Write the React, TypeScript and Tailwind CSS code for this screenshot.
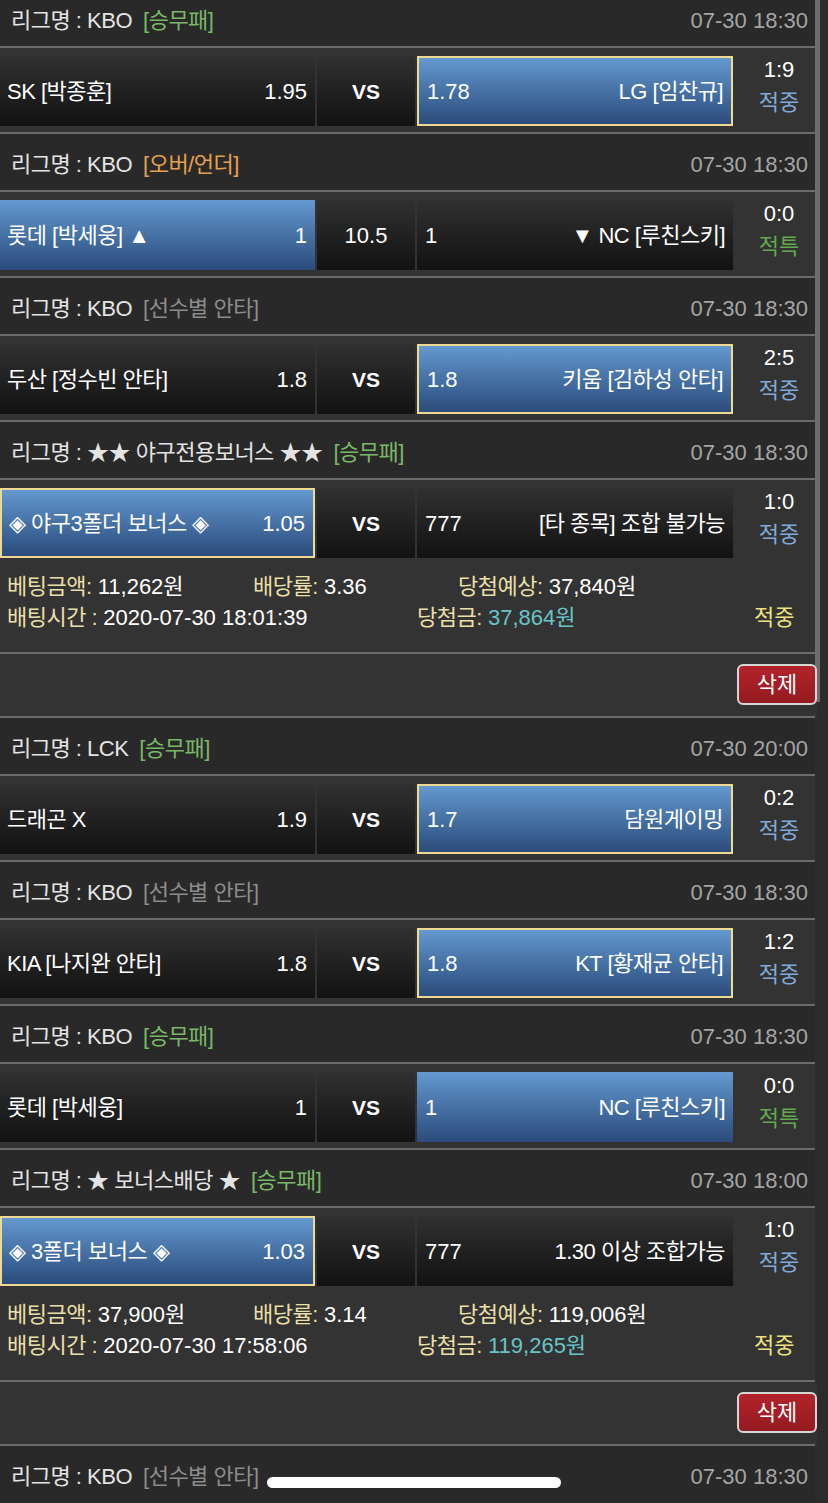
import React from 'react';

type Side = { name: string; odds: string; sel?: boolean; border?: boolean };
type Match = {
  league: string;
  tag: string;
  tagColor: string;
  time: string;
  home: Side;
  mid: string;
  midBold?: boolean;
  away: Side;
  score: string;
  result: string;
  resultColor: string;
};
type Summary = { amount: string; rate: string; expect: string; time: string; win: string };
type Group = { matches: Match[]; summary?: Summary };

const GREEN = 'text-[#79b866]';
const ORANGE = 'text-[#e6a04c]';
const GRAY = 'text-[#8c8c8c]';
const HIT = 'text-[#7fa9da]';
const SPECIAL = 'text-[#62a94e]';

const GROUPS: Group[] = [
  {
    matches: [
      { league: 'KBO', tag: '[승무패]', tagColor: GREEN, time: '07-30 18:30', home: { name: 'SK [박종훈]', odds: '1.95' }, mid: 'VS', midBold: true, away: { name: 'LG [임찬규]', odds: '1.78', sel: true, border: true }, score: '1:9', result: '적중', resultColor: HIT },
      { league: 'KBO', tag: '[오버/언더]', tagColor: ORANGE, time: '07-30 18:30', home: { name: '롯데 [박세웅] ▲', odds: '1', sel: true }, mid: '10.5', away: { name: '▼ NC [루친스키]', odds: '1' }, score: '0:0', result: '적특', resultColor: SPECIAL },
      { league: 'KBO', tag: '[선수별 안타]', tagColor: GRAY, time: '07-30 18:30', home: { name: '두산 [정수빈 안타]', odds: '1.8' }, mid: 'VS', midBold: true, away: { name: '키움 [김하성 안타]', odds: '1.8', sel: true, border: true }, score: '2:5', result: '적중', resultColor: HIT },
      { league: '★★ 야구전용보너스 ★★', tag: '[승무패]', tagColor: GREEN, time: '07-30 18:30', home: { name: '◈ 야구3폴더 보너스 ◈', odds: '1.05', sel: true, border: true }, mid: 'VS', midBold: true, away: { name: '[타 종목] 조합 불가능', odds: '777' }, score: '1:0', result: '적중', resultColor: HIT },
    ],
    summary: { amount: '11,262원', rate: '3.36', expect: '37,840원', time: '2020-07-30 18:01:39', win: '37,864원' },
  },
  {
    matches: [
      { league: 'LCK', tag: '[승무패]', tagColor: GREEN, time: '07-30 20:00', home: { name: '드래곤 X', odds: '1.9' }, mid: 'VS', midBold: true, away: { name: '담원게이밍', odds: '1.7', sel: true, border: true }, score: '0:2', result: '적중', resultColor: HIT },
      { league: 'KBO', tag: '[선수별 안타]', tagColor: GRAY, time: '07-30 18:30', home: { name: 'KIA [나지완 안타]', odds: '1.8' }, mid: 'VS', midBold: true, away: { name: 'KT [황재균 안타]', odds: '1.8', sel: true, border: true }, score: '1:2', result: '적중', resultColor: HIT },
      { league: 'KBO', tag: '[승무패]', tagColor: GREEN, time: '07-30 18:30', home: { name: '롯데 [박세웅]', odds: '1' }, mid: 'VS', midBold: true, away: { name: 'NC [루친스키]', odds: '1', sel: true }, score: '0:0', result: '적특', resultColor: SPECIAL },
      { league: '★ 보너스배당 ★', tag: '[승무패]', tagColor: GREEN, time: '07-30 18:00', home: { name: '◈ 3폴더 보너스 ◈', odds: '1.03', sel: true, border: true }, mid: 'VS', midBold: true, away: { name: '1.30 이상 조합가능', odds: '777' }, score: '1:0', result: '적중', resultColor: HIT },
    ],
    summary: { amount: '37,900원', rate: '3.14', expect: '119,006원', time: '2020-07-30 17:58:06', win: '119,265원' },
  },
];

function cellClass(s: Side) {
  const bg = s.sel
    ? 'bg-linear-to-b from-[#6499d0] to-[#2b4c7c]'
    : 'bg-linear-to-b from-[#313131] to-[#121212]';
  return `${bg} ${s.border ? 'border-2 border-[#efd993]' : ''}`;
}

function Line() {
  return <div className="h-[2px] bg-[#6b6b6b]"></div>;
}

function Header({ league, tag, tagColor, time }: { league: string; tag: string; tagColor: string; time: string }) {
  return (
    <div className="h-[56px] bg-[#292929] flex items-center pt-[4px] pl-[11px] pr-[7px]">
      <span className="text-[#e4e4e4] tracking-[-0.5px]">리그명 : {league}</span>
      <span className={`ml-[11px] tracking-[-0.5px] ${tagColor}`}>{tag}</span>
      <span className="ml-auto text-[#a5a5a5]">{time}</span>
    </div>
  );
}

function MatchBlock({ m }: { m: Match }) {
  return (
    <>
      <Header league={m.league} tag={m.tag} tagColor={m.tagColor} time={m.time} />
      <Line />
      <div className="bg-[#333333] pt-[8px] pb-[6px] flex gap-[2px]">
        <div className={`w-[315px] h-[70px] flex items-center justify-between pl-[7px] pr-[8px] text-white ${cellClass(m.home)}`}>
          <span className="tracking-[-0.5px]">{m.home.name}</span>
          <span>{m.home.odds}</span>
        </div>
        <div className="w-[98px] h-[70px] flex items-center justify-center text-white bg-linear-to-b from-[#313131] to-[#121212]">
          <span className={m.midBold ? 'font-bold text-[21px] pt-[2px]' : ''}>{m.mid}</span>
        </div>
        <div className={`w-[316px] h-[70px] flex items-center justify-between px-[8px] text-white ${cellClass(m.away)}`}>
          <span>{m.away.odds}</span>
          <span className="tracking-[-0.5px]">{m.away.name}</span>
        </div>
        <div className="flex-1 flex flex-col items-center pl-[8px] mt-[-2px] leading-[31px]">
          <span className="text-white">{m.score}</span>
          <span className={`${m.resultColor} mt-[2px]`}>{m.result}</span>
        </div>
      </div>
    </>
  );
}

function SummaryBlock({ s }: { s: Summary }) {
  const label = 'text-[#eadfa6] tracking-[-0.5px]';
  return (
    <>
      <div className="bg-[#333333] h-[88px] pt-[7px] pl-[7px] leading-[31px]">
        <div className="flex">
          <span className="w-[246px]"><span className={label}>베팅금액:</span> <span className="text-white">{s.amount}</span></span>
          <span className="w-[205px]"><span className={label}>배당률:</span> <span className="text-white">{s.rate}</span></span>
          <span><span className={label}>당첨예상:</span> <span className="text-white">{s.expect}</span></span>
        </div>
        <div className="flex">
          <span className="w-[410px]"><span className={label}>배팅시간 :</span> <span className="text-white">{s.time}</span></span>
          <span className="w-[337px]"><span className={label}>당첨금:</span> <span className="text-[#68c4c6]">{s.win}</span></span>
          <span className="text-[#eee27c]">적중</span>
        </div>
      </div>
      <Line />
      <div className="bg-[#333333] h-[62px] pt-[10px] flex justify-end mr-[-2px]">
        <button className="relative z-10 w-[80px] h-[41px] rounded-[6px] border-2 border-[#d6d6d6] bg-linear-to-b from-[#b3232a] to-[#931b21] text-white">
          삭제
        </button>
      </div>
      <Line />
    </>
  );
}

export default function App() {
  return (
    <div className="relative w-[828px] h-[1503px] overflow-hidden bg-[#2c2c2c] font-['Liberation_Sans','Noto_Sans_CJK_KR',sans-serif] text-[22px]">
      <div className="w-[815px] mt-[-10px]">
        {GROUPS.map((g, gi) => (
          <div key={gi}>
            {g.matches.map((m, i) => (
              <div key={i}>
                <MatchBlock m={m} />
                {!(g.summary && i === g.matches.length - 1) && <Line />}
              </div>
            ))}
            {g.summary && <SummaryBlock s={g.summary} />}
          </div>
        ))}
        <Header league="KBO" tag="[선수별 안타]" tagColor={GRAY} time="07-30 18:30" />
      </div>

      {/* scroll indicator + home indicator sit over the list */}
      <div className="absolute top-0 left-[815px] w-[5px] h-[702px] bg-[#6d6d6d]"></div>
      <div className="absolute left-[267px] top-[1477px] w-[294px] h-[11px] rounded-full bg-white"></div>
    </div>
  );
}
